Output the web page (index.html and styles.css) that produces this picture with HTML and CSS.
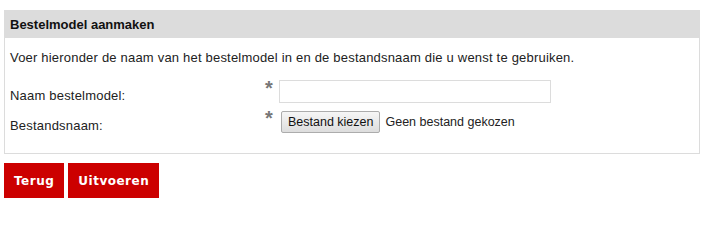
FILE: index.html
```html
<!DOCTYPE html>
<html>
<head>
<meta charset="utf-8">
<link rel="stylesheet" href="styles.css">
</head>
<body>
<div class="panel">
  <div class="panel-head">Bestelmodel aanmaken</div>
  <div class="panel-body">
    <p class="intro">Voer hieronder de naam van het bestelmodel in en de bestandsnaam die u wenst te gebruiken.</p>
    <div class="row">
      <label class="label">Naam bestelmodel:</label>
      <span class="req">*</span>
      <input class="text" type="text">
    </div>
    <div class="row">
      <label class="label">Bestandsnaam:</label>
      <span class="req">*</span>
      <span class="file"><button class="filebtn" type="button">Bestand kiezen</button><span class="filename">Geen bestand gekozen</span></span>
    </div>
  </div>
</div>
<div class="actions">
  <button class="btn" type="button">Terug</button>
  <button class="btn" type="button">Uitvoeren</button>
</div>
</body>
</html>
```
FILE: styles.css
```css
html, body { margin: 0; padding: 0; background: #fff; }
body {
  padding: 10px 10px 0 4px;
  font-family: "Liberation Sans", Arial, sans-serif;
  font-size: 13px;
  color: #222;
}
.panel {
  border: 1px solid #dcdcdc;
  width: 694px;
}
.panel-head {
  background: #dcdcdc;
  height: 27px;
  line-height: 27px;
  padding-left: 5px;
  font-weight: bold;
  color: #111;
}
.panel-body {
  padding: 12px 5px 19px 5px;
}
.intro { margin: 0 0 13px 0; line-height: 15px; letter-spacing: 0.2px; }
.row {
  display: flex;
  align-items: flex-start;
  height: 26px;
  margin-bottom: 4px;
}
.row:last-child { margin-bottom: 0; }
.label { width: 256px; padding-top: 10px; line-height: 15px; letter-spacing: 0.2px; }
.req {
  width: 13px;
  color: #777;
  font-weight: bold;
  font-size: 20px;
  line-height: 20px;
  margin-left: -1px;
  margin-right: 1px;
}
.text {
  width: 272px;
  height: 23px;
  box-sizing: border-box;
  border: 1px solid #dcdcdc;
  margin: 2px 0 0 0;
  padding: 0 2px;
}
.file { display: flex; align-items: center; margin-top: 3px; margin-left: 2px; font-size: 12.5px; }
.filebtn {
  font-family: "Liberation Sans", Arial, sans-serif;
  font-size: 12.5px;
  height: 22px;
  padding: 0 6px;
  border: 1px solid #acacac;
  border-radius: 2px;
  background: linear-gradient(#f6f6f6, #dddddd);
  color: #111;
  margin: 0;
}
.filename { margin-left: 5px; }
.actions {
  display: flex;
  gap: 4px;
  margin-top: 9px;
}
.btn {
  background: #cc0000;
  color: #fff;
  border: 0;
  height: 35px;
  padding: 0 10px;
  font-family: "DejaVu Sans", Verdana, sans-serif;
  font-weight: bold;
  font-size: 12px;
  letter-spacing: 0.5px;
  margin: 0;
}
```
